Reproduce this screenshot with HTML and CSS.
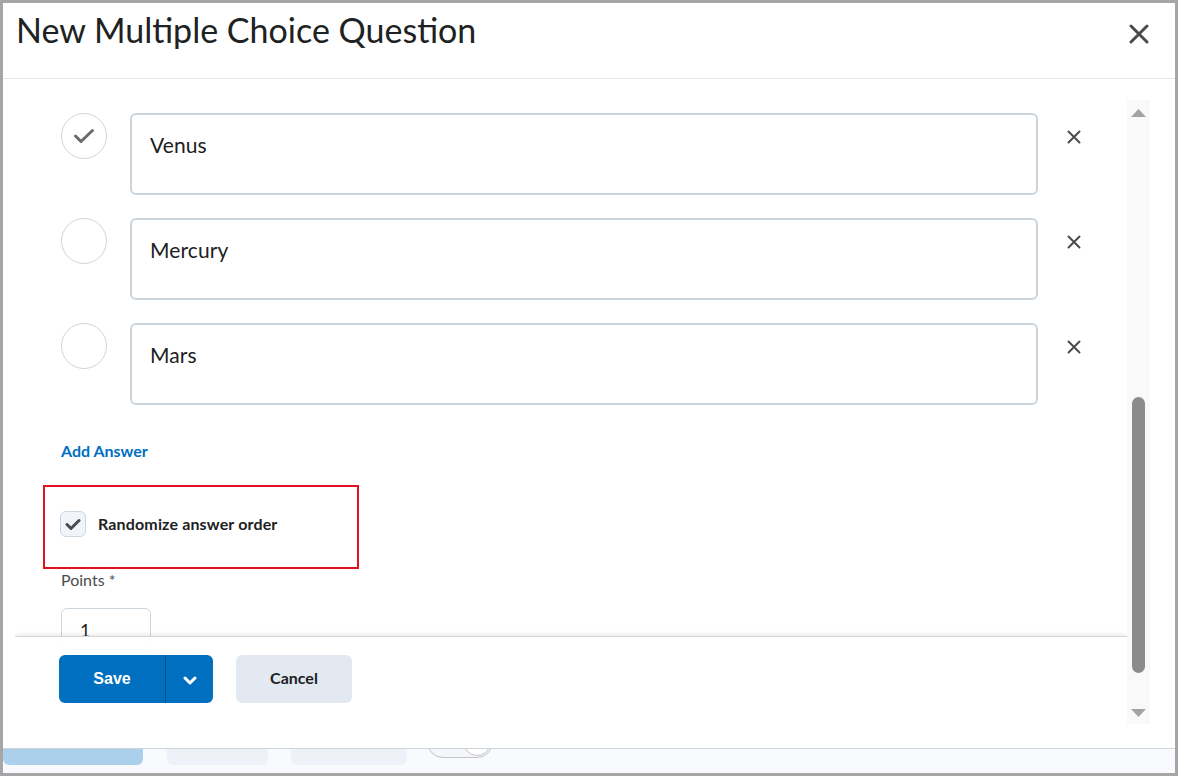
FILE: index.html
```html
<!DOCTYPE html>
<html lang="en">
<head>
<meta charset="utf-8">
<title>New Multiple Choice Question</title>
<link rel="stylesheet" href="styles.css">
</head>
<body>
<div class="screen">
  <div class="dialog">
    <header class="dialog-header">
      <h1 class="dialog-title">New Multiple Choice Question</h1>
      <button class="close-btn" aria-label="Close">
        <svg width="20" height="20" viewBox="0 0 20 20"><path d="M2 2L18 18M18 2L2 18" stroke="#494c4e" stroke-width="3" stroke-linecap="round" fill="none"/></svg>
      </button>
    </header>
    <div class="dialog-body">
      <div class="scroller">
        <div class="scroll-main">
          <div class="content">
            <div class="answers">
              <div class="answer-row">
                <span class="choice choice-correct">
                  <svg width="22" height="16" viewBox="0 0 22 16"><path d="M2.5 8L8 13.5L19.5 2.5" stroke="#686c70" stroke-width="3" stroke-linecap="round" stroke-linejoin="round" fill="none"/></svg>
                </span>
                <div class="answer-box">Venus</div>
                <button class="remove-btn" aria-label="Remove">
                  <svg width="14" height="14" viewBox="0 0 14 14"><path d="M1.5 1.5L12.5 12.5M12.5 1.5L1.5 12.5" stroke="#494c4e" stroke-width="2" stroke-linecap="round" fill="none"/></svg>
                </button>
              </div>
              <div class="answer-row">
                <span class="choice"></span>
                <div class="answer-box">Mercury</div>
                <button class="remove-btn" aria-label="Remove">
                  <svg width="14" height="14" viewBox="0 0 14 14"><path d="M1.5 1.5L12.5 12.5M12.5 1.5L1.5 12.5" stroke="#494c4e" stroke-width="2" stroke-linecap="round" fill="none"/></svg>
                </button>
              </div>
              <div class="answer-row">
                <span class="choice"></span>
                <div class="answer-box">Mars</div>
                <button class="remove-btn" aria-label="Remove">
                  <svg width="14" height="14" viewBox="0 0 14 14"><path d="M1.5 1.5L12.5 12.5M12.5 1.5L1.5 12.5" stroke="#494c4e" stroke-width="2" stroke-linecap="round" fill="none"/></svg>
                </button>
              </div>
            </div>
            <a class="add-answer">Add Answer</a>
            <div class="highlight">
              <label class="checkbox-row">
                <span class="checkbox">
                  <svg width="16" height="13" viewBox="0 0 16 13"><path d="M2 6.5L6 10.5L14 2.5" stroke="#494c4e" stroke-width="3" stroke-linecap="round" stroke-linejoin="round" fill="none"/></svg>
                </span>
                <span class="checkbox-label">Randomize answer order</span>
              </label>
            </div>
            <div class="field-label">Points *</div>
            <div class="points-input">1</div>
          </div>
          <div class="footer">
            <div class="btn-split">
              <button class="btn-save">Save</button>
              <button class="btn-menu" aria-label="More save options">
                <svg width="14" height="9" viewBox="0 0 14 9"><path d="M2 2L7 7L12 2" stroke="#ffffff" stroke-width="3" stroke-linecap="round" stroke-linejoin="round" fill="none"/></svg>
              </button>
            </div>
            <button class="btn-cancel">Cancel</button>
          </div>
        </div>
        <div class="scrollbar">
          <svg class="sb-arrow" width="15" height="8" viewBox="0 0 15 8"><polygon points="7.5,0 15,8 0,8" fill="#a3a3a3"/></svg>
          <div class="sb-track"><div class="sb-thumb"></div></div>
          <svg class="sb-arrow" width="15" height="8" viewBox="0 0 15 8"><polygon points="0,0 15,0 7.5,8" fill="#a3a3a3"/></svg>
        </div>
      </div>
    </div>
  </div>
  <div class="page-strip">
    <span class="strip-primary"></span>
    <span class="strip-btn strip-btn-a"></span>
    <span class="strip-btn strip-btn-b"></span>
    <span class="strip-toggle"><span class="strip-knob"></span></span>
  </div>
</div>
</body>
</html>
```
FILE: styles.css
```css
* { box-sizing: border-box; }
html, body { margin: 0; padding: 0; }
body {
  font-family: Lato, "Noto Sans", sans-serif;
  color: #202122;
  background: #a6a6a6;
}
button {
  font-family: inherit;
  border: none;
  padding: 0;
  margin: 0;
  background: none;
  cursor: pointer;
}

.screen {
  width: 1178px;
  height: 776px;
  border: 3px solid #a6a6a6;
  display: flex;
  flex-direction: column;
  background: #f8fafd;
  overflow: hidden;
}

.dialog {
  height: 746px;
  flex: none;
  background: #ffffff;
  border-bottom: 1px solid #cdd5dc;
  display: flex;
  flex-direction: column;
}

.dialog-header {
  height: 76px;
  flex: none;
  border-bottom: 1px solid #e3e9f1;
  display: flex;
  align-items: flex-start;
  justify-content: space-between;
  padding: 7px 26px 0 13px;
}
.dialog-title {
  margin: 0;
  font-size: 34px;
  font-weight: 400;
  line-height: 40px;
  color: #202122;
}
.close-btn {
  width: 20px;
  height: 20px;
  margin-top: 14px;
  display: flex;
}

.dialog-body {
  flex: 1;
  padding: 21px 0 0 12px;
}
.scroller {
  width: 1135px;
  height: 624px;
  display: flex;
}
.scroll-main {
  width: 1112px;
  height: 624px;
  overflow: hidden;
}
.content {
  padding: 13px 0 60px 46px;
}
.answers {
  display: flex;
  flex-direction: column;
  gap: 23px;
}
.answer-row {
  display: flex;
  align-items: flex-start;
}
.choice {
  width: 46px;
  height: 46px;
  flex: none;
  border-radius: 50%;
  border: 1px solid #cdd5dc;
  display: flex;
  align-items: center;
  justify-content: center;
}
.answer-box {
  margin-left: 23px;
  width: 908px;
  height: 82px;
  border: 2px solid #cdd5dc;
  border-radius: 6px;
  padding: 16px 18px;
  font-size: 21px;
  line-height: 28px;
  letter-spacing: 0.1px;
  color: #202122;
}
.remove-btn {
  margin-left: 29px;
  margin-top: 17px;
  width: 14px;
  height: 14px;
  display: flex;
}

.add-answer {
  display: block;
  margin-top: 36px;
  font-size: 16px;
  font-weight: 700;
  line-height: 20px;
  color: #006fbf;
}

.highlight {
  margin-top: 24px;
  margin-left: -18px;
  width: 316px;
  height: 84px;
  border: 2px solid #e3101e;
  padding: 24px 0 0 15px;
}
.checkbox-row {
  display: flex;
  align-items: center;
  gap: 12px;
}
.checkbox {
  width: 26px;
  height: 26px;
  flex: none;
  border: 1px solid #cdd5dc;
  background: #f1f5fb;
  border-radius: 6px;
  display: flex;
  align-items: center;
  justify-content: center;
}
.checkbox-label {
  font-size: 16px;
  font-weight: 700;
  line-height: 20px;
  letter-spacing: 0.15px;
  color: #202122;
}

.field-label {
  margin-top: 1px;
  font-size: 16px;
  line-height: 20px;
  color: #494c4e;
}
.points-input {
  margin-top: 18px;
  width: 90px;
  height: 42px;
  border: 1px solid #cdd5dc;
  border-radius: 6px;
  padding: 9px 18px;
  font-size: 18px;
  line-height: 24px;
  color: #202122;
}

.footer {
  position: sticky;
  bottom: 0;
  height: 88px;
  background: rgba(255, 255, 255, 0.93);
  border-top: 1px solid #d8d8d8;
  box-shadow: 0 -3px 4px -1px rgba(0, 0, 0, 0.08);
  padding: 18px 0 0 44px;
  display: flex;
  align-items: flex-start;
  gap: 23px;
}
.btn-split {
  display: flex;
  height: 48px;
}
.btn-save {
  width: 106px;
  height: 48px;
  background: #006fbf;
  color: #ffffff;
  font-family: "Liberation Sans", Arial, sans-serif;
  font-weight: 700;
  font-size: 16px;
  border-radius: 6px 0 0 6px;
}
.btn-menu {
  width: 48px;
  height: 48px;
  background: #006fbf;
  border-left: 1px solid #0b4d80;
  border-radius: 0 6px 6px 0;
  display: flex;
  align-items: center;
  justify-content: center;
  padding-top: 2px;
}
.btn-cancel {
  width: 116px;
  height: 48px;
  background: #e3e9f1;
  color: #202122;
  font-weight: 700;
  font-size: 16px;
  border-radius: 6px;
  padding-bottom: 3px;
}

.scrollbar {
  width: 23px;
  height: 624px;
  background: #f9f9f9;
  display: flex;
  flex-direction: column;
  align-items: center;
  padding: 9px 0 7px;
}
.sb-arrow { flex: none; display: block; }
.sb-track {
  flex: 1;
  width: 13px;
  padding-top: 280px;
}
.sb-thumb {
  width: 13px;
  height: 276px;
  background: #8b8b8b;
  border-radius: 7px;
}

.page-strip {
  flex: 1;
  display: flex;
  align-items: flex-end;
  overflow: hidden;
}
.strip-primary {
  width: 140px;
  height: 40px;
  margin-bottom: 8px;
  background: #abd0ec;
  border-radius: 6px;
  flex: none;
}
.strip-btn {
  height: 40px;
  margin-bottom: 8px;
  background: #eef2f8;
  border-radius: 6px;
  flex: none;
}
.strip-btn-a { width: 101px; margin-left: 24px; }
.strip-btn-b { width: 116px; margin-left: 23px; }
.strip-toggle {
  width: 66px;
  height: 32px;
  margin-left: 20px;
  margin-bottom: 15px;
  border: 1px solid #c4c4c4;
  border-radius: 16px;
  background: #f4f6f9;
  flex: none;
  display: flex;
  justify-content: flex-end;
  align-items: center;
  padding-right: 1px;
}
.strip-knob {
  width: 28px;
  height: 28px;
  border: 1px solid #c4c4c4;
  border-radius: 50%;
  background: #ffffff;
}
```
